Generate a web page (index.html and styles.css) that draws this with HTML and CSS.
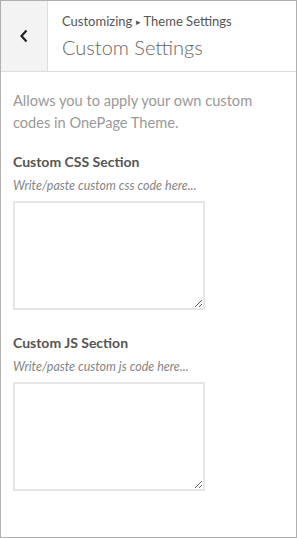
FILE: index.html
```html
<!DOCTYPE html>
<html lang="en">
<head>
    <meta charset="UTF-8">
    <meta name="viewport" content="width=device-width, initial-scale=1.0">
    <title>Custom Settings</title>
    <link rel="stylesheet" href="styles.css">
</head>
<body>
    <div class="panel">
        <div class="header">
            <button class="back" aria-label="Back">
                <svg width="10" height="14" viewBox="0 0 10 14">
                    <path d="M7.5 1.5 L2.5 7 L7.5 12.5" fill="none" stroke="#222" stroke-width="2.2"/>
                </svg>
            </button>
            <div class="title">
                <span class="crumb">Customizing <span class="arrow">&#9656;</span> Theme Settings</span>
                <h2>Custom Settings</h2>
            </div>
        </div>
        <div class="content">
            <p class="desc">Allows you to apply your own custom codes in OnePage Theme.</p>
            <div class="field">
                <label>Custom CSS Section</label>
                <span class="hint">Write/paste custom css code here...</span>
                <textarea></textarea>
            </div>
            <div class="field">
                <label>Custom JS Section</label>
                <span class="hint">Write/paste custom js code here...</span>
                <textarea></textarea>
            </div>
        </div>
    </div>
</body>
</html>
```

FILE: styles.css
```css
body {
    margin: 0;
    padding: 0;
    font-family: Lato, "Open Sans", sans-serif;
    background-color: #fff;
}
.panel {
    width: 297px;
    height: 538px;
    box-sizing: border-box;
    border: 1px solid #b0b0b0;
    background-color: #fff;
}
.header {
    display: flex;
    height: 71px;
    box-sizing: border-box;
    border-bottom: 1px solid #ddd;
}
.back {
    width: 47px;
    border: none;
    border-right: 1px solid #ddd;
    background-color: #f3f3f3;
    display: flex;
    align-items: center;
    justify-content: center;
    padding: 0;
    margin: 0;
}
.title {
    padding: 11px 0 0 14px;
    display: flex;
    flex-direction: column;
}
.crumb {
    font-size: 13px;
    color: #555;
    line-height: 18px;
}
.crumb .arrow {
    font-size: 9px;
    vertical-align: 1px;
}
.title h2 {
    margin: 3px 0 0 0;
    font-size: 20px;
    font-weight: 300;
    color: #666;
    line-height: 26px;
}
.content {
    padding: 18px 12px 0 12px;
}
.desc {
    margin: 0 0 19px 0;
    font-size: 14.6px;
    line-height: 22px;
    color: #999;
}
.field {
    display: flex;
    flex-direction: column;
    margin-bottom: 24px;
}
.field label {
    font-size: 14px;
    font-weight: 700;
    color: #555;
    line-height: 18px;
    margin-bottom: 7px;
}
.hint {
    font-size: 12.5px;
    font-style: italic;
    color: #858585;
    line-height: 16px;
    margin-bottom: 7px;
}
textarea {
    width: 192px;
    height: 109px;
    box-sizing: border-box;
    border: 2px solid #e6e6e6;
    margin: 0;
    padding: 4px;
    resize: both;
    background: #fff;
}
```
